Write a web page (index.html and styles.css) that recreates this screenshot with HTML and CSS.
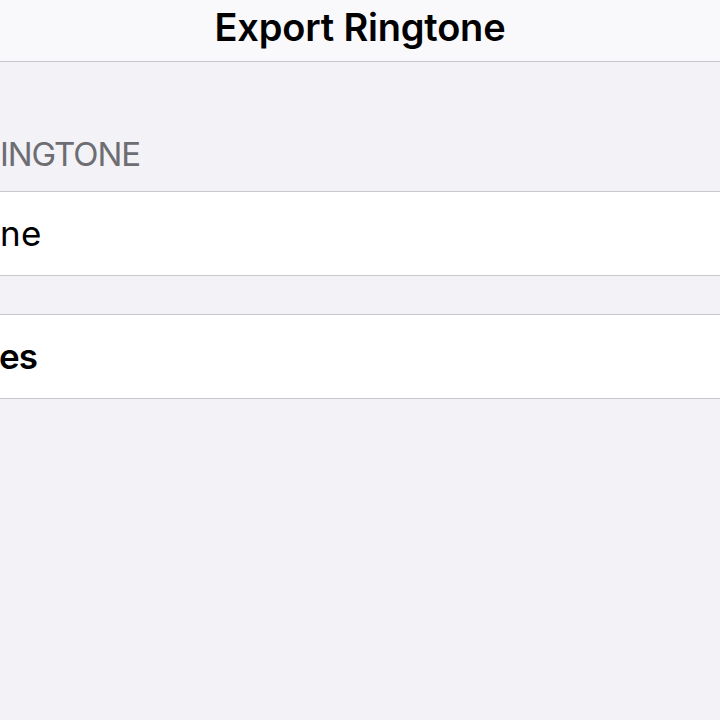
FILE: index.html
```html
<!DOCTYPE html>
<html lang="en">
<head>
  <meta charset="UTF-8">
  <meta name="viewport" content="width=device-width, initial-scale=1.0"/>
  <title>Export Ringtone</title>
  <link rel="stylesheet" href="styles.css">
</head>
<body>

  <div class="navbar">
    <h1 class="nav-title">Export Ringtone</h1>
  </div>

  <div class="section">
    <p class="section-header">INGTONE</p>
    <div class="cell">
      <span class="cell-label">ne</span>
    </div>
  </div>

  <div class="section section-tight">
    <div class="cell">
      <span class="cell-label cell-bold">es</span>
    </div>
  </div>

</body>
</html>
```

FILE: styles.css
```css
:root {
  --bg: #f2f2f7;
  --bar: #f9f9fb;
  --line: #c8c7cc;
  --muted: #6d6d72;
  --fg: #000000;
}

* {
  margin: 0;
  padding: 0;
  box-sizing: border-box;
  font-family: Inter, "Liberation Sans", sans-serif;
}

body {
  background: var(--bg);
  width: 720px;
  height: 720px;
  overflow: hidden;
}

.navbar {
  height: 62px;
  background: var(--bar);
  border-bottom: 1px solid var(--line);
  display: flex;
  align-items: center;
  justify-content: center;
}

.nav-title {
  font-size: 38px;
  font-weight: 600;
  color: var(--fg);
  letter-spacing: -0.2px;
  line-height: 1;
  padding-bottom: 8px;
}

.section-header {
  height: 129px;
  display: flex;
  align-items: flex-end;
  padding-bottom: 20px;
  font-size: 33px;
  color: var(--muted);
  letter-spacing: -1.1px;
  line-height: 1;
}

.cell {
  height: 85px;
  background: #ffffff;
  border-top: 1px solid var(--line);
  border-bottom: 1px solid var(--line);
  display: flex;
  align-items: center;
}

.section-tight {
  margin-top: 38px;
}

.cell-label {
  font-size: 35px;
  color: var(--fg);
  line-height: 1;
  letter-spacing: 0.4px;
}

.cell-bold {
  font-weight: 600;
  letter-spacing: -1px;
  margin-left: -1px;
}
```
